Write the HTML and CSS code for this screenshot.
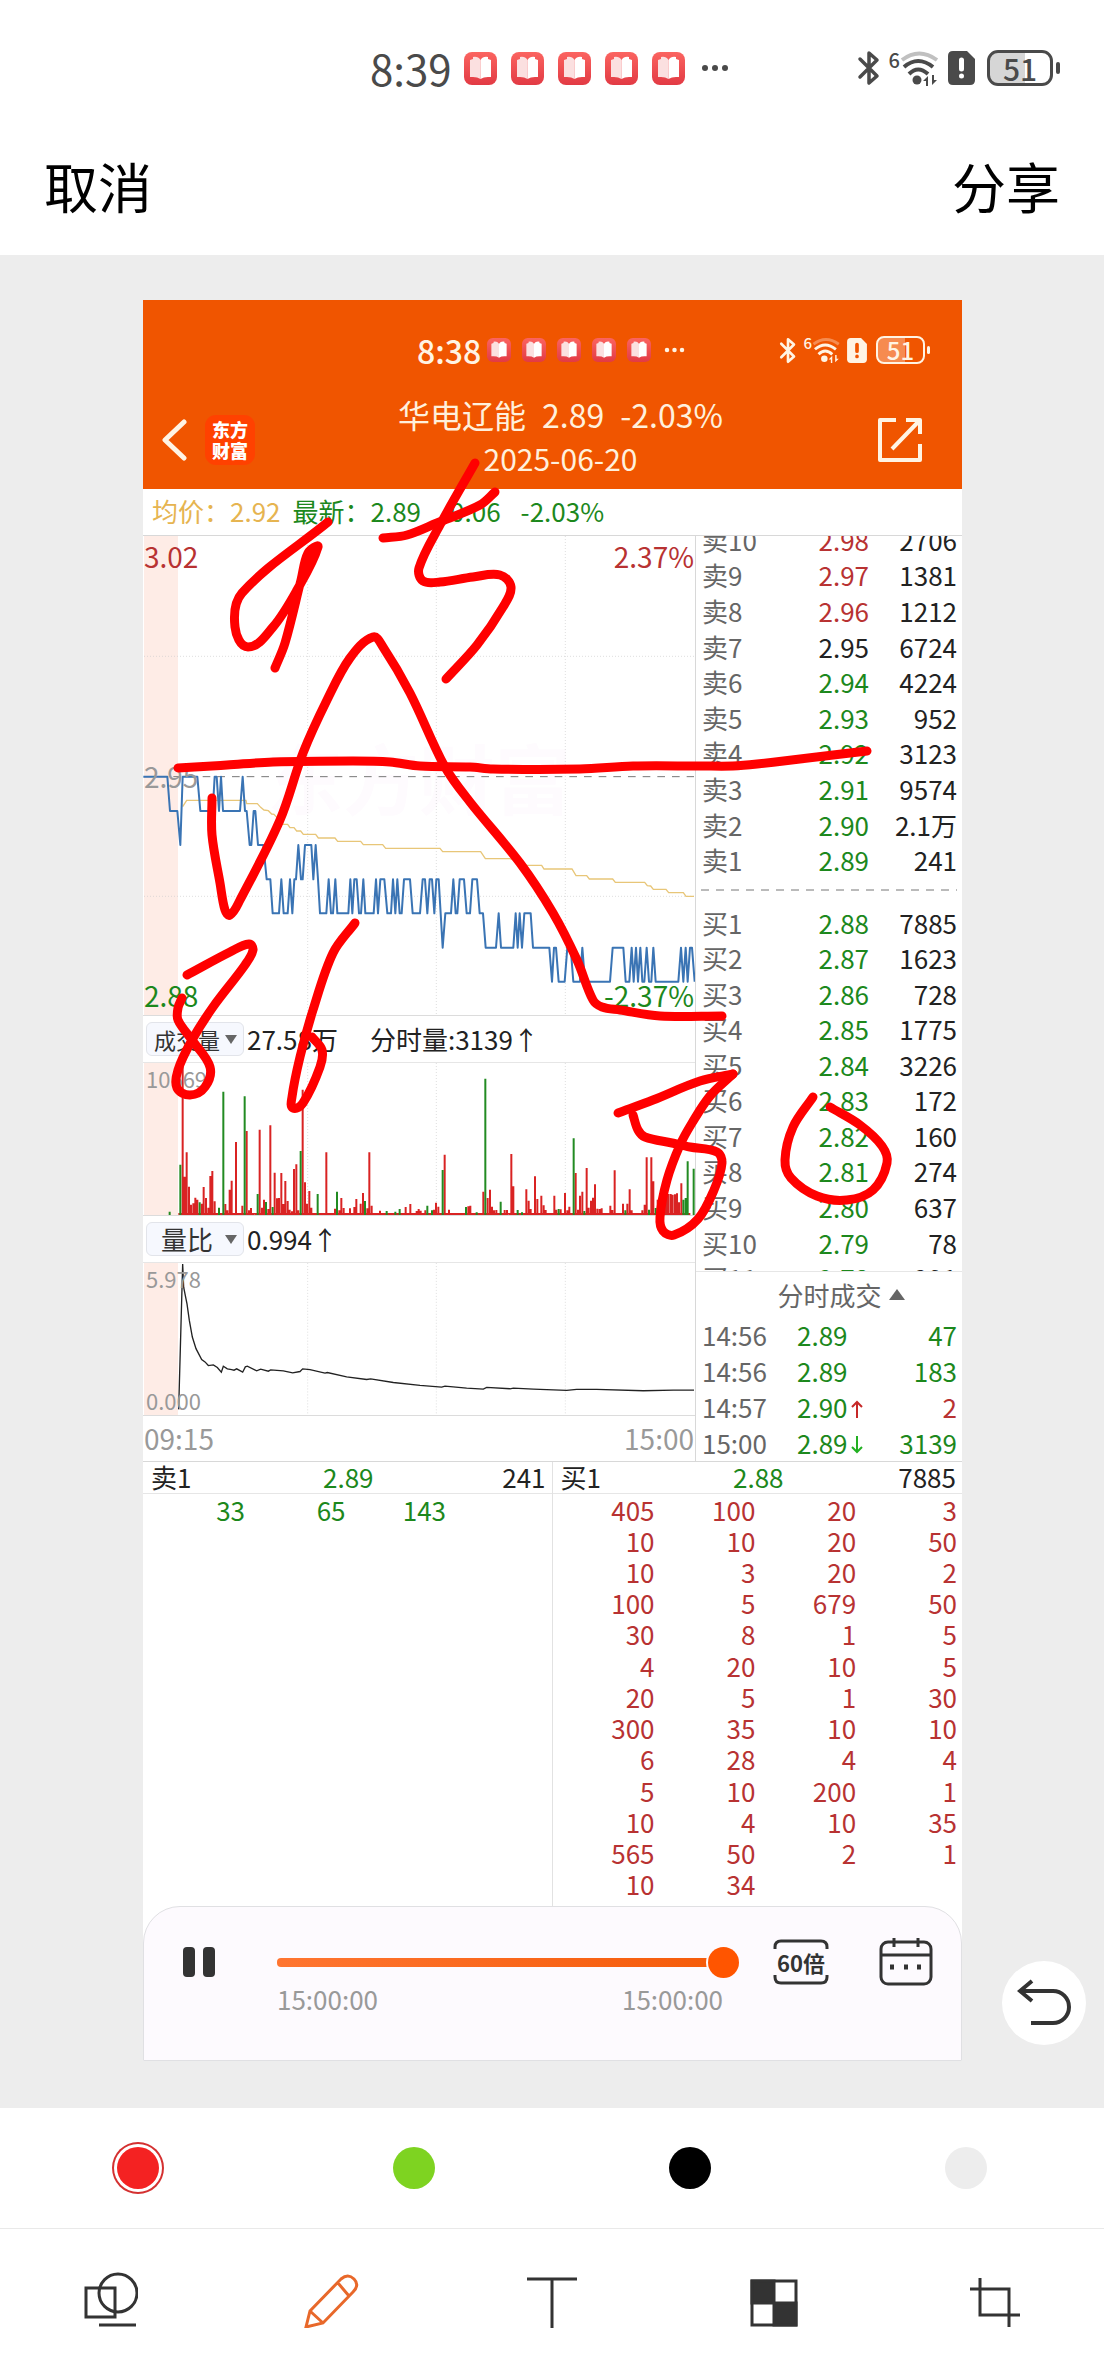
FILE: index.html
```html
<!DOCTYPE html>
<html lang="zh-CN">
<head>
<meta charset="utf-8">
<meta name="viewport" content="width=device-width, initial-scale=1">
<title>编辑截图</title>
<link rel="stylesheet" href="styles.css">
</head>
<body>
<svg class="defs" aria-hidden="true">
  <defs>
    <linearGradient id="bookBg" x1="0" y1="0" x2="0" y2="1"><stop offset="0" stop-color="#fb6460"/><stop offset="1" stop-color="#e23a44"/></linearGradient>
    <symbol id="book" viewBox="0 0 33 33"><rect width="33" height="33" rx="8" fill="url(#bookBg)"/><path d="M6 8l3-1v-2q5-1 7.500 3v19q-3-2-7.500-2h-3z" fill="#fbe0e0"/><path d="M27 8l-3-1v-2q-5-1-7.500 3v19q3-2 7.500-2h3z" fill="#fff"/></symbol>
    <symbol id="dots" viewBox="0 0 28 34"><g fill="currentColor"><circle cx="4" cy="17" r="3"/><circle cx="14" cy="17" r="3"/><circle cx="24" cy="17" r="3"/></g></symbol>
    <symbol id="bt" viewBox="0 0 24 36"><path d="M3 9l17 17-8 7V3l8 7L3 27" fill="none" stroke="currentColor" stroke-width="3.500" stroke-linejoin="round" stroke-linecap="round"/></symbol>
    <symbol id="wifi" viewBox="0 0 40 36"><g fill="none" stroke="currentColor" stroke-width="4"><path d="M2 10q17-13 35 0" opacity=".35"/><path d="M4 17q14-12 29 0"/><path d="M9 24q9-9 19 0"/></g><g fill="currentColor"><circle cx="17" cy="30" r="4.500"/><path d="M23 31l5-5v10h-2v-5zM37 30l-5 5V25h2v5z"/></g></symbol>
    <symbol id="sim" viewBox="0 0 27 34"><path d="M5 0h14l8 8v21q0 5-5 5H5q-5 0-5-5V5q0-5 5-5z" fill="currentColor"/><path d="M13.500 9v9M13.500 25v.1" class="hole" fill="none" stroke-width="5" stroke-linecap="round"/></symbol>
  </defs>
</svg>

<header class="top">
  <div class="status">
    <span class="clock">8:39</span>
    <span class="apps"><svg class="app"><use href="#book"/></svg><svg class="app"><use href="#book"/></svg><svg class="app"><use href="#book"/></svg><svg class="app"><use href="#book"/></svg><svg class="app"><use href="#book"/></svg></span>
    <svg class="more"><use href="#dots"/></svg>
    <span class="signals"><svg class="bt"><use href="#bt"/></svg><span class="six">6</span><svg class="wifi"><use href="#wifi"/></svg><svg class="sim"><use href="#sim"/></svg><span class="battery">51</span></span>
  </div>
  <nav class="actions"><button type="button">取消</button><button type="button">分享</button></nav>
</header>

<main class="canvas">
  <article class="shot">
    <header class="stock-head">
      <div class="status small">
        <span class="clock">8:38</span>
        <span class="apps"><svg class="app"><use href="#book"/></svg><svg class="app"><use href="#book"/></svg><svg class="app"><use href="#book"/></svg><svg class="app"><use href="#book"/></svg><svg class="app"><use href="#book"/></svg></span>
        <svg class="more"><use href="#dots"/></svg>
        <span class="signals"><svg class="bt"><use href="#bt"/></svg><span class="six">6</span><svg class="wifi"><use href="#wifi"/></svg><svg class="sim"><use href="#sim"/></svg><span class="battery">51</span></span>
      </div>
      <div class="title-row">
        <div class="brand">
          <button type="button" aria-label="返回"><svg width="26" height="42" viewBox="0 0 26 42"><path d="M23 3L4 21l19 18" fill="none" stroke="#fff4e4" stroke-width="5" stroke-linecap="round" stroke-linejoin="round"/></svg></button>
          <span class="logo">东方<br>财富</span>
        </div>
        <div class="titles"><h1>华电辽能&ensp;2.89&ensp;-2.03%</h1><p>2025-06-20</p></div>
        <button type="button" class="share" aria-label="分享"><svg width="44" height="44" viewBox="0 0 44 44"><path d="M18 2H2V42H42V26M28 2H42V16M42 2L14 31" fill="none" stroke="#fff4e4" stroke-width="4" stroke-linejoin="round"/></svg></button>
      </div>
    </header>

    <div class="quote"><span class="avg">均价：2.92</span><span class="last">最新：2.89</span><span>-0.06</span><span>-2.03%</span></div>

    <div class="market">
      <section class="charts">
        <div class="plot price">
          <span class="mark">东方财富</span>
          <svg viewBox="9 18 1656 1437" preserveAspectRatio="none">
            <rect x="12" y="18" width="102" height="1437" fill="#feece6"/>
            <path class="grid" d="M503 18V1455M889 18V1455M1276 18V1455M12 379H1662M12 1099H1662"/>
            <path d="M12 740H1662" stroke="#777" stroke-width="3" stroke-dasharray="23 21"/>
            <path id="average" class="average"/>
            <path id="trend" class="trend"/>
          </svg>
          <span class="tag tl red">3.02</span><span class="tag tr red">2.37%</span>
          <span class="tag ml">2.95</span>
          <span class="tag bl green">2.88</span><span class="tag br green">-2.37%</span>
        </div>
        <div class="metric"><label class="pick"><select aria-label="指标一"><option>成交量</option></select></label><span>27.58万</span><span class="next">分时量:3139↑</span></div>
        <div class="plot volume">
          <svg viewBox="9 190 1656 456" preserveAspectRatio="none">
            <rect x="12" y="190" width="102" height="456" fill="#feece6"/>
            <path class="grid" d="M503 190V646M889 190V646M1276 190V646"/>
            <path id="barsUp" stroke="#d92323" stroke-width="6"/>
            <path id="barsDown" stroke="#228b22" stroke-width="6"/>
          </svg>
          <span class="tag tl minor">10669</span>
        </div>
        <div class="metric"><label class="pick wide"><select aria-label="指标二"><option>量比</option></select></label><span>0.994↑</span></div>
        <div class="plot ratio">
          <svg viewBox="9 787 1656 458" preserveAspectRatio="none">
            <rect x="12" y="787" width="102" height="458" fill="#feece6"/>
            <path class="grid" d="M503 787V1245M889 787V1245M1276 787V1245"/>
            <path id="ratio" fill="none" stroke="#222" stroke-width="4"/>
          </svg>
          <span class="tag tl minor">5.978</span><span class="tag bl minor">0.000</span>
        </div>
        <div class="hours"><span>09:15</span><span>15:00</span></div>
      </section>

      <aside class="side">
        <div class="book">
          <table class="levels sell">
            <tr><th>卖10</th><td class="red">2.98</td><td>2706</td></tr>
            <tr><th>卖9</th><td class="red">2.97</td><td>1381</td></tr>
            <tr><th>卖8</th><td class="red">2.96</td><td>1212</td></tr>
            <tr><th>卖7</th><td>2.95</td><td>6724</td></tr>
            <tr><th>卖6</th><td class="green">2.94</td><td>4224</td></tr>
            <tr><th>卖5</th><td class="green">2.93</td><td>952</td></tr>
            <tr><th>卖4</th><td class="green">2.92</td><td>3123</td></tr>
            <tr><th>卖3</th><td class="green">2.91</td><td>9574</td></tr>
            <tr><th>卖2</th><td class="green">2.90</td><td>2.1万</td></tr>
            <tr><th>卖1</th><td class="green">2.89</td><td>241</td></tr>
          </table>
          <svg class="split" viewBox="0 0 256 2" preserveAspectRatio="none"><path d="M0 1H256" stroke="#777" stroke-width="1" stroke-dasharray="8 7"/></svg>
          <table class="levels buy">
            <tr><th>买1</th><td class="green">2.88</td><td>7885</td></tr>
            <tr><th>买2</th><td class="green">2.87</td><td>1623</td></tr>
            <tr><th>买3</th><td class="green">2.86</td><td>728</td></tr>
            <tr><th>买4</th><td class="green">2.85</td><td>1775</td></tr>
            <tr><th>买5</th><td class="green">2.84</td><td>3226</td></tr>
            <tr><th>买6</th><td class="green">2.83</td><td>172</td></tr>
            <tr><th>买7</th><td class="green">2.82</td><td>160</td></tr>
            <tr><th>买8</th><td class="green">2.81</td><td>274</td></tr>
            <tr><th>买9</th><td class="green">2.80</td><td>637</td></tr>
            <tr><th>买10</th><td class="green">2.79</td><td>78</td></tr>
            <tr><th>买11</th><td class="green">2.78</td><td>291</td></tr>
          </table>
        </div>
        <h2 class="deals">分时成交 <svg width="16" height="11" viewBox="0 0 16 11"><path d="M8 0l8 11H0z" fill="#666"/></svg></h2>
        <table class="ticks">
          <tr><th>14:56</th><td class="green">2.89</td><td class="green">47</td></tr>
          <tr><th>14:56</th><td class="green">2.89</td><td class="green">183</td></tr>
          <tr><th>14:57</th><td class="green">2.90<svg class="arrow" viewBox="0 0 12 18"><path d="M6 18V2M1 7l5-5 5 5" stroke="#c62828"/></svg></td><td class="red">2</td></tr>
          <tr><th>15:00</th><td class="green">2.89<svg class="arrow" viewBox="0 0 12 18"><path d="M6 0v16M1 11l5 5 5-5" stroke="#22b022"/></svg></td><td class="green">3139</td></tr>
        </table>
      </aside>
    </div>

    <div class="queues">
      <section class="queue">
        <h3><span>卖1</span><span class="green">2.89</span><span>241</span></h3>
        <table class="one"><tr class="green"><td>33</td><td>65</td><td>143</td><td></td></tr></table>
      </section>
      <section class="queue">
        <h3><span>买1</span><span class="green">2.88</span><span>7885</span></h3>
        <table class="many red">
          <tr><td>405</td><td>100</td><td>20</td><td>3</td></tr>
          <tr><td>10</td><td>10</td><td>20</td><td>50</td></tr>
          <tr><td>10</td><td>3</td><td>20</td><td>2</td></tr>
          <tr><td>100</td><td>5</td><td>679</td><td>50</td></tr>
          <tr><td>30</td><td>8</td><td>1</td><td>5</td></tr>
          <tr><td>4</td><td>20</td><td>10</td><td>5</td></tr>
          <tr><td>20</td><td>5</td><td>1</td><td>30</td></tr>
          <tr><td>300</td><td>35</td><td>10</td><td>10</td></tr>
          <tr><td>6</td><td>28</td><td>4</td><td>4</td></tr>
          <tr><td>5</td><td>10</td><td>200</td><td>1</td></tr>
          <tr><td>10</td><td>4</td><td>10</td><td>35</td></tr>
          <tr><td>565</td><td>50</td><td>2</td><td>1</td></tr>
          <tr><td>10</td><td>34</td><td></td><td></td></tr>
        </table>
      </section>
    </div>

    <footer class="player">
      <button type="button" aria-label="暂停"><svg width="32" height="30" viewBox="0 0 32 30"><rect width="12" height="30" rx="4" fill="#333"/><rect x="20" width="12" height="30" rx="4" fill="#333"/></svg></button>
      <div class="seek">
        <input type="range" min="0" max="100" value="100" aria-label="回放进度">
        <div class="times"><span>15:00:00</span><span>15:00:00</span></div>
      </div>
      <button type="button" class="speed"><svg width="56" height="46" viewBox="0 0 56 46"><path d="M2 10V8q0-6 6-6H48q6 0 6 6v2M2 36v2q0 6 6 6H48q6 0 6-6v-2" fill="none" stroke="#333" stroke-width="3"/></svg><span>60倍</span></button>
      <button type="button" class="calendar" aria-label="日历"><svg width="54" height="48" viewBox="0 0 54 48"><rect x="2" y="4" width="50" height="42" rx="7" fill="none" stroke="#333" stroke-width="3"/><path d="M2 17H52M15 0V9M39 0V9" stroke="#333" stroke-width="3"/><path d="M11 29h4M25 29h4M38 29h4" stroke="#333" stroke-width="5"/></svg></button>
    </footer>
    <svg id="ink" class="ink" viewBox="0 0 819 1761" preserveAspectRatio="none" aria-hidden="true"></svg>
  </article>
  <button type="button" class="undo" aria-label="撤销"><svg width="54" height="48" viewBox="0 0 54 48"><path d="M15 2L3 12l12 10M4 12H36a16 16 0 0 1 0 32H14" fill="none" stroke="#333" stroke-width="4"/></svg></button>
</main>

<footer class="editor">
  <div class="swatches">
    <label><input type="radio" name="ink" class="c-red" aria-label="红色" checked></label>
    <label><input type="radio" name="ink" class="c-green" aria-label="绿色"></label>
    <label><input type="radio" name="ink" class="c-black" aria-label="黑色"></label>
    <label><input type="radio" name="ink" class="c-grey" aria-label="灰色"></label>
  </div>
  <div class="tools">
    <button type="button" aria-label="形状"><svg viewBox="0 0 56 56"><path d="M4 16H33V45H4zM17 53H54"/><circle cx="36" cy="21" r="19"/></svg></button>
    <button type="button" aria-label="画笔" class="on"><svg viewBox="0 0 56 56"><path d="M3 55L7 39 38 7Q45 1 51 7 57 13 50 20L20 51zM35 11L46 24M7 39L20 51"/></svg></button>
    <button type="button" aria-label="文字"><svg viewBox="0 0 56 56"><path d="M3 7H53M28 7V56"/></svg></button>
    <button type="button" aria-label="马赛克"><svg viewBox="0 0 56 56"><path d="M7 9H51V53H7z"/><path d="M7 9H29V31H7zM29 31H51V53H29z" fill="#333"/></svg></button>
    <button type="button" aria-label="裁剪"><svg viewBox="0 0 56 56"><path d="M4 17H43V55M14 6V43H54"/></svg></button>
  </div>
</footer>
<script src="script.js"></script>
</body>
</html>
```
FILE: styles.css
```css
* { box-sizing: border-box; }
body {
  margin: 0;
  min-height: 100vh;
  display: flex;
  flex-direction: column;
  background: #fff;
  color: #222;
  font: 400 26px/36px "Noto Sans CJK SC", sans-serif;
}
h1, h2, h3, p { margin: 0; font-weight: 400; }
button { border: 0; padding: 0; background: none; color: inherit; font: inherit; display: grid; place-items: center; }
svg { display: block; }
.defs { position: absolute; width: 0; height: 0; }
table { width: 100%; border-collapse: collapse; table-layout: fixed; }
th, td { padding: 0; font-weight: 400; line-height: 30px; }
.red { color: #b83232; }
.green { color: #1c881c; }

/* phone status bar */
.status { --hole: #fff; display: flex; align-items: center; height: 136px; padding: 0 44px 0 370px; color: #4a4a4a; }
.hole { stroke: var(--hole); }
.clock { font-size: 42px; width: 94px; }
.apps { display: flex; gap: 14px; }
.app { width: 33px; height: 33px; }
.more { width: 28px; height: 34px; margin-left: 16px; }
.signals { display: flex; align-items: center; margin-left: auto; }
.bt { width: 24px; height: 36px; }
.six { align-self: flex-start; font-size: 20px; line-height: 20px; margin-left: 8px; font-weight: 500; }
.wifi { width: 40px; height: 36px; }
.sim { width: 27px; height: 34px; margin: 0 12px 0 8px; }
.battery {
  position: relative;
  width: 66px; height: 36px;
  margin-right: 7px;
  border: 3px solid currentColor;
  border-radius: 11px;
  background: linear-gradient(90deg, #d6d6d6 58%, transparent 58%);
  font-size: 30px; line-height: 30px; font-weight: 500; text-align: center;
}
.battery::after { content: ""; position: absolute; right: -10px; top: 9px; width: 4px; height: 12px; border-radius: 2px; background: currentColor; }
.actions { display: flex; justify-content: space-between; align-items: flex-start; height: 119px; padding: 14px 44px 0; font-size: 54px; line-height: 72px; color: #000; }

.canvas { position: relative; flex: 1; background: #ededed; padding: 45px 142px 47px 143px; }
.shot { position: relative; background: #fff; }

/* quote header */
.stock-head { background: #f05500; color: #fff0dc; height: 189px; }
.status.small { --hole: #f05500; height: 90px; padding: 10px 32px 0 274px; color: #fff4e4; }
.small .clock { font-size: 32px; width: 70px; font-weight: 500; }
.small .apps { gap: 11px; }
.small .app { width: 24px; height: 24px; }
.small .more { width: 21px; height: 26px; margin-left: 13px; }
.small .bt { width: 18px; height: 27px; }
.small .six { font-size: 15px; line-height: 14px; margin-left: 6px; }
.small .wifi { width: 29px; height: 26px; }
.small .sim { width: 20px; height: 25px; margin: 0 9px 0 6px; }
.small .battery { width: 49px; height: 28px; border-width: 2px; border-radius: 8px; font-size: 24px; line-height: 24px; margin-right: 5px; background: linear-gradient(90deg, #f68b50 60%, transparent 60%); }
.small .battery::after { right: -7px; top: 8px; width: 3px; height: 8px; }
.title-row { display: grid; grid-template-columns: 120px 1fr 104px; height: 99px; align-items: center; }
.brand { display: flex; align-items: center; gap: 18px; padding-left: 18px; }
.logo { width: 50px; height: 50px; padding: 4px 0; border-radius: 11px; background: #ff4100; color: #fff; font-size: 18px; line-height: 21px; font-weight: 900; text-align: center; }
.titles { text-align: center; white-space: nowrap; align-self: start; }
h1 { font-size: 32px; line-height: 48px; }
.titles p { font-size: 30px; line-height: 40px; }
.share { justify-self: start; margin-left: 20px; }

.quote { display: flex; gap: 20px; height: 47px; padding: 0 9px; line-height: 44px; border-bottom: 1px solid #d8d8d8; color: #1c881c; white-space: nowrap; }
.avg { color: #e6b450; margin-right: -8px; }

.market { display: flex; border-bottom: 1px solid #d8d8d8; }
.charts { flex: 1; min-width: 0; }
.side { width: 267px; border-left: 1px solid #d8d8d8; }

.plot { position: relative; border-bottom: 1px solid #dcdcdc; }
.plot svg { position: relative; width: 100%; height: 100%; }
.price { height: 480px; }
.volume { height: 153px; }
.ratio { height: 153px; }
.grid { stroke: #cfcfcf; stroke-width: 2; stroke-dasharray: 3 6; fill: none; }
.trend { fill: none; stroke: #3a74b4; stroke-width: 6; stroke-linejoin: round; }
.average { fill: none; stroke: #e8c678; stroke-width: 4; }
.mark { position: absolute; inset: 0; display: grid; place-items: center; font-size: 76px; line-height: 80px; font-weight: 700; color: #fefbfe; }
.tag { position: absolute; font-size: 28px; line-height: 40px; }
.tl { left: 1px; top: 0; }
.tr { right: 1px; top: 0; }
.ml { left: 1px; top: 220px; color: #999; }
.bl { left: 1px; bottom: 0; }
.br { right: 1px; bottom: 0; }
.minor { left: 3px; font-size: 22px; line-height: 30px; color: #999; }

.metric { display: flex; align-items: center; height: 47px; padding-left: 3px; border-bottom: 1px solid #e6e6e6; white-space: nowrap; }
.next { margin-left: 32px; }
.pick { position: relative; width: 98px; margin-right: 3px; }
.pick::after { content: ""; position: absolute; right: 7px; top: 13px; border: 6px solid transparent; border-top: 9px solid #666; border-bottom: 0; pointer-events: none; }
.pick select { display: block; width: 100%; height: 34px; padding: 0 0 0 7px; border: 1px solid #e2e4ea; border-radius: 6px; background: #f6f8fe; appearance: none; font: inherit; font-size: 22px; line-height: 32px; color: #333; }
.pick.wide select { padding-left: 14px; font-size: 26px; }
.hours { display: flex; justify-content: space-between; height: 45px; padding: 0 1px; font-size: 28px; line-height: 44px; color: #999; }

/* order book */
.book { height: 736px; overflow: hidden; border-bottom: 1px solid #e6e6e6; }
.side th { text-align: left; padding-left: 6px; color: #666; }
.levels th { width: 90px; }
.levels td { text-align: right; }
.levels td:nth-child(2) { width: 83px; }
.side td:last-child { text-align: right; padding-right: 5px; }
.sell { height: 356px; margin-top: -14px; }
.buy { height: 391px; }
.split { width: 256px; height: 2px; margin: 11px 5px 14px; }
.deals { height: 45px; display: flex; align-items: center; justify-content: center; gap: 7px; padding-left: 24px; font-size: 26px; line-height: 42px; color: #666; }
.ticks { height: 144px; }
.ticks th { width: 101px; }
.ticks td:nth-child(2) { width: 80px; white-space: nowrap; }
.arrow { display: inline-block; width: 12px; height: 18px; margin-left: 3px; fill: none; stroke-width: 2; }

/* queues */
.queues { display: flex; height: 445px; }
.queue { flex: 1; }
.queue:first-child { flex: 0 0 50%; border-right: 1px solid #e2e2e2; }
.queue h3 { display: grid; grid-template-columns: 1fr 1fr 1fr; height: 32px; padding: 0 6px 0 8px; border-bottom: 1px solid #e6e6e6; font-size: 26px; line-height: 30px; }
.queue h3 span:nth-child(2) { text-align: center; }
.queue h3 span:last-child { text-align: right; }
.queue td { text-align: right; padding-right: 5px; }
.queue td:first-child { width: 107px; }
.one { height: 31px; }
.many { height: 406px; }

.player { position: relative; display: flex; align-items: flex-start; height: 155px; margin-top: -1px; padding: 31px 28px 0 39px; border: 1px solid #e0e0e3; border-radius: 37px 37px 0 0; background: #fdfafe; }
.player > button { height: 48px; }
.seek { flex: 1; min-width: 0; margin: 8px 34px 0 62px; }
.seek input { display: block; appearance: none; width: 100%; height: 32px; margin: 0; background: none; }
.seek input::-webkit-slider-runnable-track { height: 9px; border-radius: 4px; background: linear-gradient(90deg, #ff7530, #f55a08); }
.seek input::-webkit-slider-thumb { appearance: none; width: 31px; height: 31px; margin-top: -11px; border-radius: 50%; background: #ff5500; box-shadow: 0 0 0 2px #fdfafe; }
.times { display: flex; justify-content: space-between; padding: 3px 16px 0 0; color: #999; }
.speed svg, .speed span { grid-area: 1 / 1; }
.speed span { font-size: 22px; line-height: 30px; font-weight: 700; color: #333; }
.calendar { margin-left: 50px; }

.ink { position: absolute; inset: 0; width: 100%; height: 100%; pointer-events: none; fill: none; stroke: #f00; stroke-width: 9; stroke-linecap: round; stroke-linejoin: round; }
.undo { position: absolute; right: 18px; bottom: 63px; width: 84px; height: 84px; border-radius: 50%; background: #fff; }

/* editor bars */
.swatches { display: grid; grid-template-columns: repeat(4, 1fr); height: 120px; }
.swatches label { display: grid; place-items: center; }
.swatches input { appearance: none; margin: 0; width: 42px; height: 42px; border-radius: 50%; background: currentColor; }
.swatches input:checked { box-shadow: 0 0 0 3px #fff, 0 0 0 5px #d43030; }
.c-red { color: #f42222; }
.c-green { color: #7ed321; }
.c-black { color: #000; }
.c-grey { color: #ededed; }
.tools { display: grid; grid-template-columns: repeat(5, 1fr); height: 148px; padding-bottom: 5px; border-top: 1px solid #e9e9e9; }
.tools svg { width: 56px; height: 56px; fill: none; stroke: #333; stroke-width: 3; }
.tools .on svg { stroke: #e8682a; }
```
FILE: script.js
```js
const byId = id => document.getElementById(id);
const line = pts => 'M' + pts.map(p => p.join(' ')).join('L');
const pairs = text => text.trim().split(/\s+/).map(p => p.split(',').map(Number));

// Price trend: x, number of ticks below the previous close
const trend = pairs(`10,0 82,0 90,1 112,1 121,2 128,0 172,0 181,1 218,1 224,0 230,0 237,1 243,0 249,1 300,1 308,0 315,1 320,1
329,2 334,2 341,1 346,1 354,2 370,2 380,3 391,3 398,4 417,4 424,3 431,4 443,4 450,3 457,4 463,3 468,3 475,2 483,3 488,3 495,2
514,2 520,3 527,2 534,3 540,4 559,4 566,3 573,4 579,4 586,3 592,4 625,4 631,3 637,4 643,3 650,3 657,4 663,4 670,3 676,4 701,4
708,3 714,4 721,3 733,3 742,4 753,4 759,3 766,4 772,3 779,4 785,4 792,3 810,3 818,4 840,4 848,3 855,3 862,4 869,3 876,3 883,4
889,3 896,3 908,5 916,4 933,4 940,3 947,4 952,4 959,3 972,3 980,4 990,4 997,3 1011,3 1019,4 1029,4 1037,5 1068,5 1076,4 1083,5
1120,5 1127,4 1133,5 1139,4 1146,5 1153,4 1172,4 1179,5 1228,5 1236,6 1242,5 1248,5 1256,6 1274,6 1282,5 1292,5 1300,6 1320,6
1327,5 1335,6 1410,6 1418,5 1450,5 1457,6 1468,6 1475,5 1481,6 1488,5 1494,6 1501,5 1507,6 1513,6 1520,5 1527,6 1534,6 1540,5
1547,6 1615,6 1623,5 1630,6 1637,5 1643,6 1650,5 1656,5 1664,6`);
byId('trend').setAttribute('d', line(trend.map(([x, n]) => [x, Math.round(740 + n * 102.5)])));

byId('average').setAttribute('d', line(pairs(`128,830 140,811 318,811 320,821 352,821 362,832 372,840 385,842 395,852 402,853
430,883 443,883 450,893 462,893 470,903 482,903 490,913 527,913 535,924 585,924 593,934 662,934 670,944 728,944 737,955 900,955
908,965 1022,965 1036,986 1110,986 1140,996 1160,1006 1205,1006 1212,1017 1296,1017 1308,1037 1340,1037 1348,1047 1418,1047
1426,1057 1514,1057 1522,1067 1532,1068 1540,1078 1578,1078 1586,1088 1630,1088 1638,1099 1662,1099`)));

byId('ratio').setAttribute('d', line(pairs(`116,1228 128,790 131,860 136,885 141,910 148,960 157,1010 168,1045 185,1078 195,1085
205,1096 220,1094 232,1102 244,1116 250,1098 262,1106 275,1108 282,1110 290,1106 308,1116 316,1100 322,1098 350,1112 362,1107
385,1113 392,1109 430,1112 458,1118 480,1114 488,1106 510,1108 555,1119 562,1117 620,1130 680,1138 692,1136 760,1147 840,1156
905,1161 915,1158 980,1164 1030,1167 1040,1162 1110,1166 1120,1164 1180,1167 1280,1171 1310,1168 1370,1168 1510,1172 1600,1170 1662,1170`)));

// Volume bars: x, top
const up = pairs(`128,195 134,531 140,458 147,561 153,615 160,611 166,594 172,600 185,612 191,562 198,595 205,624 211,529
217,514 224,605 256,613 262,632 269,570 275,543 288,427 307,618 320,394 327,632 333,625 359,390 366,624 372,600 385,628 391,377
404,519 411,596 417,595 424,520 430,613 436,544 443,604 449,630 456,635 462,508 469,494 475,632 488,270 495,548 501,612 508,574
514,624 559,458 585,627 598,632 604,595 611,625 630,626 643,622 649,598 662,612 669,580 682,626 688,458 695,618 720,633 797,622
811,613 830,634 836,628 842,633 856,632 882,630 888,609 895,621 914,465 927,630 985,620 991,618 1030,576 1043,595 1050,570
1056,621 1062,632 1069,631 1094,631 1101,631 1114,463 1120,560 1159,569 1166,603 1172,628 1185,530 1192,598 1204,588 1211,617
1217,631 1243,588 1249,630 1262,629 1275,580 1282,632 1288,621 1307,520 1314,630 1320,588 1327,576 1340,505 1346,624 1353,603
1359,594 1365,554 1372,627 1379,628 1385,626 1411,618 1417,631 1424,512 1449,612 1462,612 1469,569 1475,632 1507,632 1514,615
1520,473 1534,473 1540,545 1553,600 1560,580 1566,590 1573,560 1579,570 1585,583 1592,583 1598,585 1605,584 1611,581 1617,608 1624,551`);
const down = pairs(`89,636 121,495 179,608 237,624 250,276 314,290 353,583 378,607 398,622 482,454 533,583 591,576 675,604
740,634 766,636 779,628 862,618 876,632 908,511 978,622 1010,638 1036,237 1082,606 1133,631 1146,638 1256,628 1301,416 1333,634
1456,632 1527,630 1547,625 1630,600 1637,595 1643,485 1661,507`);
for (let x = 118; x < 1652; x += 6) up.push([x, 640]);
const bars = list => list.map(([x, y]) => `M${x} ${y}V646`).join('');
byId('barsUp').setAttribute('d', bars(up));
byId('barsDown').setAttribute('d', bars(down));

// Freehand strokes, smoothed through their points
const strokes = [
  '328,522 242,593 235,627 248,647 273,627 297,590 318,547 308,553 301,580 285,643 275,668',
  '475,463 440,525 419,568 423,581 440,582 473,577 500,575 511,587 503,607 477,645 446,679',
  '495,492 480,505 437,523 407,535 383,538',
  '178,768 227,765 273,762 353,761 390,762 420,766 470,767 493,769 580,769 633,766 700,766 733,766 757,764 867,751',
  '212,798 212,835 220,883 225,910 230,915 240,900 280,820 303,753 327,700 350,658 373,637 383,647 410,693 445,767 470,802 520,863 553,913 577,960 593,1000 602,1007 620,1010 660,1016 722,1016',
  '187,975 230,952 249,944 253,950 245,965 213,1007 192,1040 178,1070 177,1088 190,1095 205,1087 210,1067 192,1040 178,1020 178,1008 182,998',
  '355,923 333,953 313,1010 300,1057 292,1097 293,1108 303,1103 320,1067 322,1050 312,1037',
  '618,1113 653,1100 700,1081 733,1074',
  '733,1074 710,1096 692,1123 680,1145 667,1180 660,1217 663,1231 674,1235 698,1219 714,1190 722,1163 717,1152 690,1147 672,1143 645,1137 638,1130 633,1115',
  '813,1097 793,1127 785,1160 791,1178 817,1196 847,1200 873,1190 887,1163 882,1146 860,1125 830,1107'
];
const smooth = pts => {
  let d = 'M' + pts[0];
  for (let i = 0; i < pts.length - 1; i++) {
    const a = pts[i - 1] || pts[i], b = pts[i], c = pts[i + 1], e = pts[i + 2] || c;
    const len = Math.hypot(c[0] - b[0], c[1] - b[1]);
    const h1 = len / (Math.hypot(c[0] - a[0], c[1] - a[1]) || 1) / 3;
    const h2 = len / (Math.hypot(e[0] - b[0], e[1] - b[1]) || 1) / 3;
    d += `C${b[0] + (c[0] - a[0]) * h1},${b[1] + (c[1] - a[1]) * h1} ${c[0] - (e[0] - b[0]) * h2},${c[1] - (e[1] - b[1]) * h2} ${c}`;
  }
  return d;
};
for (const s of strokes) {
  const path = document.createElementNS('http://www.w3.org/2000/svg', 'path');
  path.setAttribute('d', smooth(pairs(s).map(([x, y]) => [x - 143, y - 300])));
  byId('ink').append(path);
}
```
